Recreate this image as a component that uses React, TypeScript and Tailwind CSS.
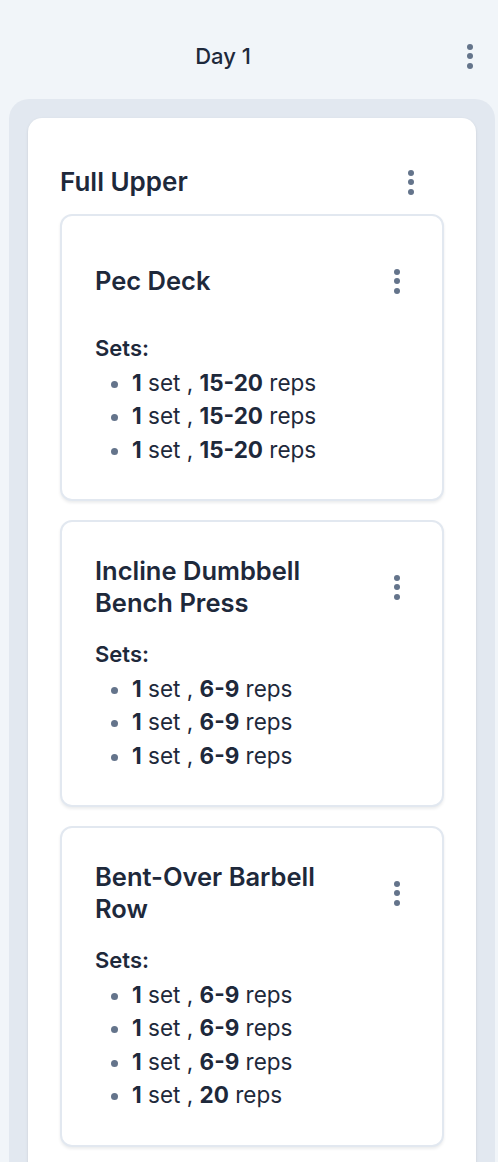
import React from 'react';

type SetRow = { count: number; reps: string };

const exercises: { name: string; sets: SetRow[] }[] = [
  {
    name: 'Pec Deck',
    sets: [
      { count: 1, reps: '15-20' },
      { count: 1, reps: '15-20' },
      { count: 1, reps: '15-20' },
    ],
  },
  {
    name: 'Incline Dumbbell Bench Press',
    sets: [
      { count: 1, reps: '6-9' },
      { count: 1, reps: '6-9' },
      { count: 1, reps: '6-9' },
    ],
  },
  {
    name: 'Bent-Over Barbell Row',
    sets: [
      { count: 1, reps: '6-9' },
      { count: 1, reps: '6-9' },
      { count: 1, reps: '6-9' },
      { count: 1, reps: '20' },
    ],
  },
];

const Kebab = () => (
  <div className="flex flex-col items-center gap-[3.5px]">
    <span className="block h-[6px] w-[6px] rounded-full bg-[#64748b]" />
    <span className="block h-[6px] w-[6px] rounded-full bg-[#64748b]" />
    <span className="block h-[6px] w-[6px] rounded-full bg-[#64748b]" />
  </div>
);

const App = () => {
  return (
    <div className="h-[1162px] overflow-hidden bg-[#f1f5f9] font-['Inter',sans-serif] text-[#1e293b]">
      {/* Day header */}
      <div className="mt-8 mb-[19px] flex h-12 items-center">
        <div className="flex-1 text-center text-[22px] font-medium">Day 1</div>
        <button className="mr-1 flex h-12 w-12 items-center justify-center">
          <Kebab />
        </button>
      </div>

      {/* Day column */}
      <div className="ml-[9px] mr-[3px] rounded-[20px] bg-[#e2e8f0] p-[19px] pb-10">
        <div className="rounded-[14px] bg-white p-8 shadow-sm">
          <div className="flex h-16 items-center">
            <div className="flex-1 text-[26px] font-semibold leading-8">Full Upper</div>
            <button className="flex w-[66px] justify-center">
              <Kebab />
            </button>
          </div>

          <div className="flex flex-col gap-[19px]">
            {exercises.map((ex, i) => (
              <div
                key={i}
                className="rounded-xl border-2 border-[#e2e8f0] bg-white pl-[33px] pr-8 pt-[33px] pb-[33px] shadow-[0_2px_3px_rgba(15,23,42,0.08)]"
              >
                <div className="flex min-h-16 items-center">
                  <div className="max-w-[270px] text-[25.5px] font-semibold leading-8">{ex.name}</div>
                  <button className="ml-auto flex w-[26px] justify-center">
                    <Kebab />
                  </button>
                </div>
                <div className="mt-[19px] text-[22px] font-semibold leading-[33.5px]">Sets:</div>
                <ul className="list-disc pl-[37px] text-[22.5px] leading-[33.5px] marker:text-[#64748b]">
                  {ex.sets.map((s, j) => (
                    <li key={j}>
                      <span className="font-bold">{s.count}</span> set ,{' '}
                      <span className="font-bold">{s.reps}</span> reps
                    </li>
                  ))}
                </ul>
              </div>
            ))}
          </div>
        </div>
      </div>
    </div>
  );
};

export default App;
